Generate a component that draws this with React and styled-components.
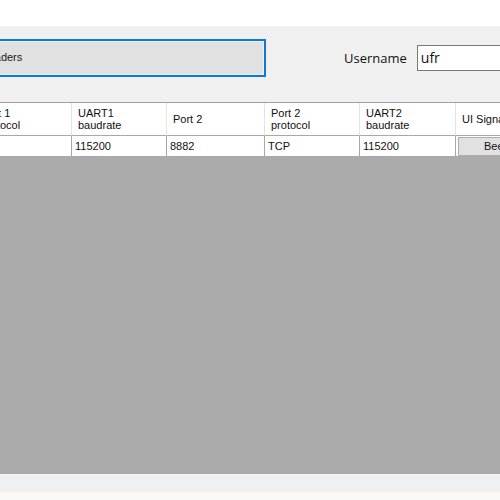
import React from 'react'
import styled, {createGlobalStyle} from 'styled-components'

const Global = createGlobalStyle`
  html, body {
    margin: 0;
    padding: 0;
    background: #ffffff;
  }
  body {
    width: 500px;
    height: 500px;
    overflow: hidden;
    font-family: "Liberation Sans", Arial, sans-serif;
  }
`

const Window = styled.div`
  width: 500px;
  height: 500px;
  display: flex;
  flex-direction: column;
  overflow: hidden;
  background: #ffffff;
`

const TitleGap = styled.div`
  height: 26px;
  flex: none;
  background: #ffffff;
`

const Toolbar = styled.div`
  height: 76px;
  flex: none;
  box-sizing: border-box;
  padding-top: 13px;
  background: #f0f0f0;
  display: flex;
  align-items: flex-start;
  overflow: hidden;
`

const ToolRow = styled.div`
  height: 38px;
  display: flex;
  align-items: center;
  flex: none;
`

const LoadButton = styled.button`
  margin-left: -40px;
  width: 306px;
  height: 38px;
  box-sizing: border-box;
  border: 2px solid #0f78d4;
  box-shadow: inset 0 0 0 1px #e9f1f9;
  background: #e1e1e1;
  font-family: "Liberation Sans", Arial, sans-serif;
  font-size: 11px;
  color: #1a1a1a;
  text-align: left;
  padding: 0 0 2px 0;
  display: flex;
  align-items: center;
`

const ButtonText = styled.span`
  margin-left: -7px;
`

const Label = styled.span`
  margin-left: 78px;
  font-family: "Open Sans", "Liberation Sans", sans-serif;
  font-size: 13px;
  color: #111;
`

const TextInput = styled.div`
  margin-left: 10px;
  width: 120px;
  height: 26px;
  box-sizing: border-box;
  border: 1px solid #7a7a7a;
  background: #ffffff;
  font-family: "Open Sans", "Liberation Sans", sans-serif;
  font-size: 14px;
  color: #111;
  display: flex;
  align-items: center;
  padding-left: 3px;
  padding-bottom: 2px;
`

const Grid = styled.div`
  flex: 1;
  display: flex;
  flex-direction: column;
  border-top: 1px solid #a0a0a0;
  background: #ababab;
  overflow: hidden;
`

const Rows = styled.div`
  display: grid;
  grid-template-columns: 97px 95px 98px 95px 96px 100px;
  margin-left: -25px;
  width: 581px;
  background: #ffffff;
  flex: none;
`

const HeadCell = styled.div`
  box-sizing: border-box;
  height: 33px;
  border-right: 1px solid #e3e3e3;
  border-bottom: 1px solid #a8a8a8;
  padding-left: 6px;
  display: flex;
  align-items: center;
  font-size: 11px;
  line-height: 12px;
  color: #111;
  white-space: pre-line;
`

const Cell = styled.div`
  height: 21px;
  box-sizing: border-box;
  border-right: 1px solid #a8a8a8;
  border-bottom: 1px solid #a8a8a8;
  padding-left: 3px;
  display: flex;
  align-items: center;
  font-size: 11px;
  color: #111;
`

const GridButton = styled.div`
  flex: 1;
  height: 19px;
  margin: 0 1px 0 -1px;
  box-sizing: border-box;
  border: 1px solid #adadad;
  background: #e1e1e1;
  display: flex;
  align-items: center;
  justify-content: center;
  font-size: 11px;
  color: #111;
  white-space: nowrap;
`

const Status = styled.div`
  height: 18px;
  flex: none;
  background: #f0f0f0;
  border-top: 1px solid #f7f7f7;
  box-sizing: border-box;
`

const Footer = styled.div`
  height: 8px;
  flex: none;
  background: #fbf8f8;
`

const headers = ['Port 1\nprotocol', 'UART1\nbaudrate', 'Port 2', 'Port 2\nprotocol', 'UART2\nbaudrate', 'UI Signal']
const row = ['', '115200', '8882', 'TCP', '115200']

export default function App () {
  return (
    <Window>
      <Global />
      <TitleGap />
      <Toolbar>
        <ToolRow>
          <LoadButton><ButtonText>Load headers</ButtonText></LoadButton>
          <Label>Username</Label>
          <TextInput>ufr</TextInput>
        </ToolRow>
      </Toolbar>
      <Grid>
        <Rows>
          {headers.map(h => <HeadCell key={h}>{h}</HeadCell>)}
          {row.map((c, i) => <Cell key={i}>{c}</Cell>)}
          <Cell><GridButton>Beenden</GridButton></Cell>
        </Rows>
      </Grid>
      <Status />
      <Footer />
    </Window>
  )
}
